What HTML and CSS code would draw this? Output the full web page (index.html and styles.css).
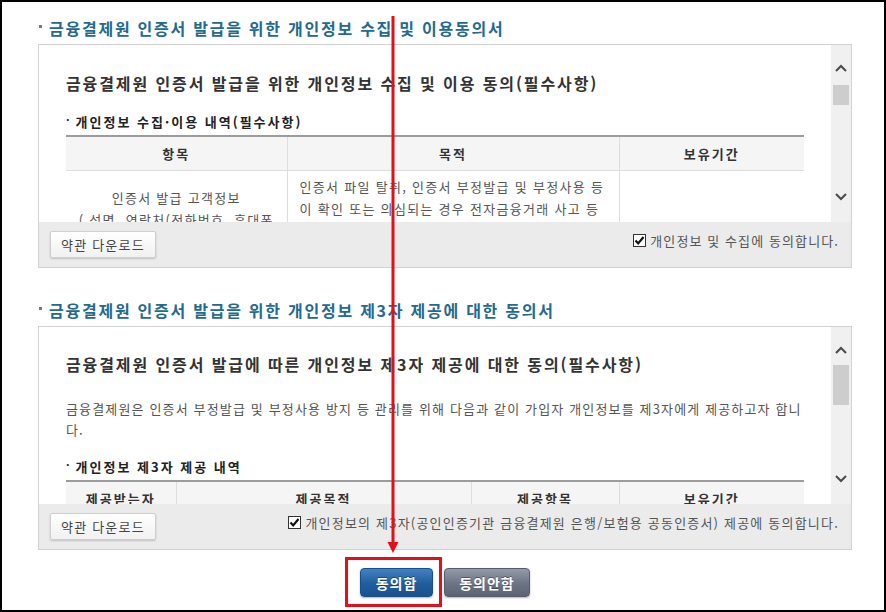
FILE: index.html
```html
<!DOCTYPE html>
<html lang="ko">
  <head>
    <meta charset="UTF-8" />
    <meta name="viewport" content="width=device-width, initial-scale=1.0" />
    <title>인증서 발급 약관 동의</title>
    <link rel="stylesheet" href="styles.css">
  </head>
  <body>
    <div class="frame">
      <section class="agree">
        <h2 class="agree-title">금융결제원 인증서 발급을 위한 개인정보 수집 및 이용동의서</h2>
        <div class="agree-box">
          <div class="scroll-area">
            <div class="scroll-content">
              <h3 class="doc-title">금융결제원 인증서 발급을 위한 개인정보 수집 및 이용 동의(필수사항)</h3>
              <h4 class="doc-sub">개인정보 수집·이용 내역(필수사항)</h4>
              <table class="terms terms-collect">
                <thead>
                  <tr>
                    <th>항목</th>
                    <th>목적</th>
                    <th>보유기간</th>
                  </tr>
                </thead>
                <tbody>
                  <tr>
                    <td class="center">인증서 발급 고객정보<br>( 성명, 연락처(전화번호, 휴대폰<br>번호), 이메일주소, 주민등록<br>번호 또는 사업자등록번호 )</td>
                    <td class="left">인증서 파일 탈취, 인증서 부정발급 및 부정사용 등<br>이 확인 또는 의심되는 경우 전자금융거래 사고 등<br>의 조사 및 대응, 민원처리 등 고객지원 서비스<br>제공 및 인증서 발급·관리 업무 처리를 위한<br>본인확인</td>
                    <td class="center">10년</td>
                  </tr>
                </tbody>
              </table>
            </div>
            <div class="scrollbar">
              <svg class="arrow" width="12" height="8" viewBox="0 0 12 8"><path d="M1 7 L6 2 L11 7" /></svg>
              <div class="thumb thumb-sm"></div>
              <svg class="arrow arrow-down" width="12" height="8" viewBox="0 0 12 8"><path d="M1 1 L6 6 L11 1" /></svg>
            </div>
          </div>
          <div class="box-footer">
            <button class="btn-download">약관 다운로드</button>
            <label class="agree-check wide">
              <svg width="13" height="13" viewBox="0 0 13 13"><rect x="0.5" y="0.5" width="12" height="12" /><path d="M2.5 6.5 L5.2 9.4 L10.5 3" /></svg>
              개인정보 및 수집에 동의합니다.
            </label>
          </div>
        </div>
      </section>

      <section class="agree second">
        <h2 class="agree-title">금융결제원 인증서 발급을 위한 개인정보 제3자 제공에 대한 동의서</h2>
        <div class="agree-box">
          <div class="scroll-area">
            <div class="scroll-content">
              <h3 class="doc-title">금융결제원 인증서 발급에 따른 개인정보 제3자 제공에 대한 동의(필수사항)</h3>
              <p class="doc-text">금융결제원은 인증서 부정발급 및 부정사용 방지 등 관리를 위해 다음과 같이 가입자 개인정보를 제3자에게 제공하고자 합니다.</p>
              <h4 class="doc-sub">개인정보 제3자 제공 내역</h4>
              <table class="terms terms-provide">
                <thead>
                  <tr>
                    <th>제공받는자</th>
                    <th>제공목적</th>
                    <th>제공항목</th>
                    <th>보유기간</th>
                  </tr>
                </thead>
                <tbody>
                  <tr>
                    <td class="center">공인인증기관</td>
                    <td class="center">인증서 발급 및 관리</td>
                    <td class="center">성명, 연락처</td>
                    <td class="center">10년</td>
                  </tr>
                </tbody>
              </table>
            </div>
            <div class="scrollbar">
              <svg class="arrow" width="12" height="8" viewBox="0 0 12 8"><path d="M1 7 L6 2 L11 7" /></svg>
              <div class="thumb thumb-lg"></div>
              <svg class="arrow arrow-down" width="12" height="8" viewBox="0 0 12 8"><path d="M1 1 L6 6 L11 1" /></svg>
            </div>
          </div>
          <div class="box-footer">
            <button class="btn-download">약관 다운로드</button>
            <label class="agree-check">
              <svg width="13" height="13" viewBox="0 0 13 13"><rect x="0.5" y="0.5" width="12" height="12" /><path d="M2.5 6.5 L5.2 9.4 L10.5 3" /></svg>
              개인정보의 제3자(공인인증기관 금융결제원 은행/보험용 공동인증서) 제공에 동의합니다.
            </label>
          </div>
        </div>
      </section>

      <div class="actions">
        <button class="btn btn-agree">동의함</button>
        <button class="btn btn-disagree">동의안함</button>
      </div>

      <!-- annotation overlay -->
      <div class="mark-box"></div>
      <svg class="mark-arrow" width="12" height="540" viewBox="0 0 12 540">
        <rect x="4.5" y="0" width="3" height="530" />
        <path d="M0.5 526 L11.5 526 L6 537 Z" />
      </svg>
    </div>
  </body>
</html>
```

FILE: styles.css
```css
* {
  box-sizing: border-box;
}

body {
  margin: 0;
  font-family: "Noto Sans CJK KR", "Noto Sans", sans-serif;
  font-size: 13px;
  color: #555;
  background: #fff;
}

.frame {
  position: relative;
  width: 886px;
  height: 612px;
  border: 2px solid #000;
  padding: 16px 32px 0 36px;
  overflow: hidden;
}

/* section headings */
.agree-title {
  margin: 0 0 6px;
  font-size: 16px;
  line-height: 20px;
  font-weight: bold;
  letter-spacing: 1.75px;
  color: #236a8e;
  white-space: nowrap;
}

.agree-title::before {
  content: "";
  display: inline-block;
  width: 3px;
  height: 3px;
  margin: 0 7px 0 1px;
  vertical-align: 7px;
  background: #5d7f93;
}

.agree.second {
  margin-top: 32px;
}

.agree-box {
  width: 814px;
  border: 1px solid #d2d2d2;
  background: #ebebeb;
}

.scroll-area {
  display: flex;
  height: 177px;
  background: #fff;
}

.scroll-content {
  flex: 1;
  overflow: hidden;
  padding: 28px 27px 0;
}

.second .scroll-content {
  padding-top: 27px;
}

.doc-title {
  margin: 0;
  font-size: 16px;
  line-height: 20px;
  font-weight: bold;
  letter-spacing: 1.9px;
  color: #333;
  white-space: nowrap;
}

.doc-sub {
  margin: 17px 0 4px;
  font-size: 13px;
  line-height: 18px;
  font-weight: bold;
  letter-spacing: 2px;
  color: #222;
}

.doc-sub::before {
  content: "·";
  margin-right: 4px;
  vertical-align: 3px;
  font-size: 11px;
}

.doc-text {
  margin: 24px 0 0;
  line-height: 21px;
  letter-spacing: 1.15px;
  color: #555;
}

.second .doc-sub {
  margin-top: 15px;
}

.terms {
  width: 738px;
  border-collapse: collapse;
  table-layout: fixed;
  border-top: 2px solid #9c9c9c;
  letter-spacing: 1.3px;
}

.terms th {
  height: 34px;
  background: #f5f5f5;
  font-weight: bold;
  letter-spacing: 2px;
  color: #333;
  border-bottom: 1px solid #ddd;
  border-left: 1px solid #ddd;
}

.terms td {
  padding: 5px 12px;
  line-height: 22px;
  border-left: 1px solid #ddd;
  border-bottom: 1px solid #ddd;
  vertical-align: middle;
}

.terms th:first-child,
.terms td:first-child {
  border-left: 0;
}

.terms .center {
  text-align: center;
}

.terms .left {
  text-align: left;
}

.terms-collect th:nth-child(1) { width: 221px; }
.terms-collect th:nth-child(2) { width: 332px; }
.terms-collect th:nth-child(3) { width: 185px; }

.terms-provide th:nth-child(1) { width: 110px; }
.terms-provide th:nth-child(2) { width: 295px; }
.terms-provide th:nth-child(3) { width: 148px; }
.terms-provide th:nth-child(4) { width: 185px; }

/* fake scrollbar */
.scrollbar {
  display: flex;
  flex-direction: column;
  align-items: center;
  width: 20px;
  background: #f0f0f0;
  padding-top: 19px;
}

.scrollbar .arrow path {
  fill: none;
  stroke: #4a4a4a;
  stroke-width: 2;
}

.thumb {
  width: 16px;
  margin-top: 13px;
  background: #cdcdcd;
}

.thumb-sm { height: 20px; }
.thumb-lg { height: 40px; margin-top: 11px; }

.arrow-down {
  margin-top: auto;
  margin-bottom: 21px;
}

.box-footer {
  display: flex;
  justify-content: space-between;
  align-items: flex-start;
  height: 45px;
  padding: 9px 12px 0 11px;
}

.btn-download {
  height: 27px;
  padding: 0 10px;
  font-family: inherit;
  font-size: 13px;
  letter-spacing: 1.2px;
  color: #444;
  background: linear-gradient(#fff, #f1f1f1);
  border: 1px solid #cfcfcf;
  border-radius: 2px;
  box-shadow: 0 1px 2px rgba(0, 0, 0, 0.18);
}

.agree-check {
  display: flex;
  align-items: center;
  gap: 4px;
  margin-top: 1px;
  line-height: 17px;
  letter-spacing: 1.2px;
  color: #555;
  white-space: nowrap;
}

.agree-check.wide {
  letter-spacing: 1.1px;
}

.agree-check rect {
  fill: #fff;
  stroke: #333;
}

.agree-check svg path {
  fill: none;
  stroke: #111;
  stroke-width: 2.2;
}

/* bottom buttons */
.actions {
  display: flex;
  justify-content: center;
  gap: 11px;
  margin-top: 18px;
}

.btn {
  height: 29px;
  border-radius: 4px;
  font-family: inherit;
  font-size: 14px;
  font-weight: bold;
  letter-spacing: 1px;
  color: #fff;
  text-shadow: 0 -1px 0 rgba(0, 0, 0, 0.35);
  box-shadow: 0 1px 2px rgba(0, 0, 0, 0.3);
}

.btn-agree {
  width: 73px;
  background: linear-gradient(#4182c3, #215d9c 55%, #1b528e);
  border: 1px solid #1b4e85;
}

.btn-disagree {
  width: 86px;
  background: linear-gradient(#939aa9, #6c7384 55%, #5c6373);
  border: 1px solid #555c6b;
}

/* red annotation */
.mark-box {
  position: absolute;
  left: 343px;
  top: 555px;
  width: 97px;
  height: 50px;
  border: 3px solid #e3101a;
}

.mark-arrow {
  position: absolute;
  left: 385px;
  top: 14px;
}

.mark-arrow rect,
.mark-arrow path {
  fill: #e3101a;
}
```
